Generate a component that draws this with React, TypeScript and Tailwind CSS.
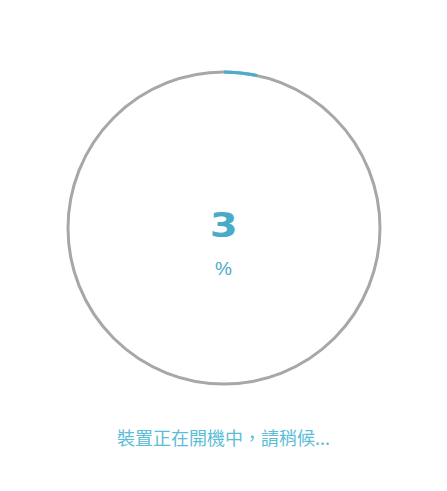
import React from "react";

export default function App() {
  const pct = 3;
  const r = 156;
  const c = 2 * Math.PI * r;
  const dash = (c * pct) / 100 + 4;
  return (
    <div
      className="w-full h-[491px] bg-white flex flex-col items-center pt-[69px]"
      style={{ fontFamily: '"Liberation Sans", "Noto Sans CJK TC", sans-serif' }}
    >
      <div className="relative w-[318px] h-[318px] flex flex-col items-center justify-center">
        <svg className="absolute inset-0" width="318" height="318" viewBox="0 0 318 318">
          <circle cx="159" cy="159" r={r} fill="none" stroke="#a7a7a7" strokeWidth="3" />
          <circle
            cx="159"
            cy="159"
            r={r}
            fill="none"
            stroke="#49aecd"
            strokeWidth="3"
            strokeDasharray={`${dash} ${c}`}
            transform="rotate(-90 159 159)"
          />
        </svg>
        <div className="relative flex flex-col items-center mt-[30px]">
          <div
            className="text-[34px] leading-[34px] font-bold text-[#4aabc9] scale-x-[1.18]"
            style={{ fontFamily: '"DejaVu Sans", sans-serif' }}
          >
            3
          </div>
          <div className="text-[19px] leading-[19px] mt-[17px] text-[#4aabc9]">%</div>
        </div>
      </div>
      <div
        className="mt-[41px] text-[18px] leading-[18px] text-[#5cbdd7] tracking-[0px]"
        style={{ fontFamily: '"Noto Sans CJK TC", "Liberation Sans", sans-serif' }}
      >
        裝置正在開機中，請稍候...
      </div>
    </div>
  );
}
